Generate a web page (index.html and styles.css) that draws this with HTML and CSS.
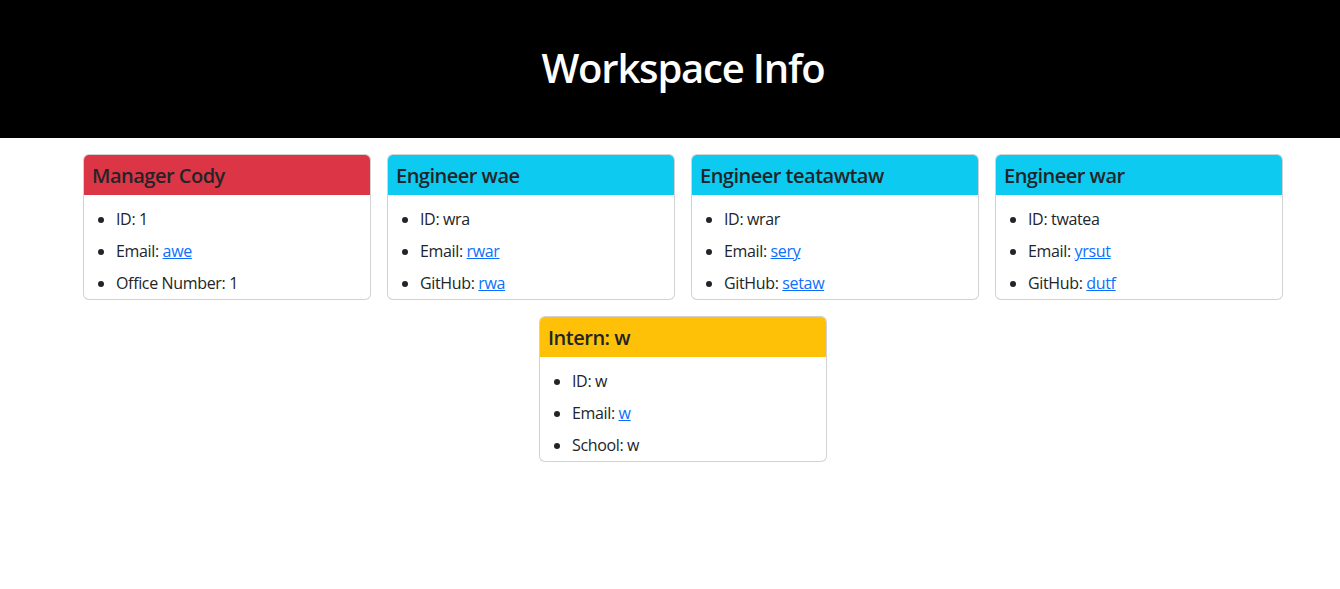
FILE: index.html
```html
<!DOCTYPE html>
<html lang="en">
<head>
<meta charset="utf-8">
<title>Workspace Info</title>
<link rel="stylesheet" href="styles.css">
</head>
<body>
<div class="page">
  <header class="banner">
    <h1 class="banner-title">Workspace Info</h1>
  </header>
  <main class="cards">
    <section class="card">
      <h2 class="card-header header-manager">Manager Cody</h2>
      <ul class="card-list">
        <li>ID: 1</li>
        <li>Email: <a href="#">awe</a></li>
        <li>Office Number: 1</li>
      </ul>
    </section>
    <section class="card">
      <h2 class="card-header header-engineer">Engineer wae</h2>
      <ul class="card-list">
        <li>ID: wra</li>
        <li>Email: <a href="#">rwar</a></li>
        <li>GitHub: <a href="#">rwa</a></li>
      </ul>
    </section>
    <section class="card">
      <h2 class="card-header header-engineer">Engineer teatawtaw</h2>
      <ul class="card-list">
        <li>ID: wrar</li>
        <li>Email: <a href="#">sery</a></li>
        <li>GitHub: <a href="#">setaw</a></li>
      </ul>
    </section>
    <section class="card">
      <h2 class="card-header header-engineer">Engineer war</h2>
      <ul class="card-list">
        <li>ID: twatea</li>
        <li>Email: <a href="#">yrsut</a></li>
        <li>GitHub: <a href="#">dutf</a></li>
      </ul>
    </section>
    <section class="card">
      <h2 class="card-header header-intern">Intern: w</h2>
      <ul class="card-list">
        <li>ID: w</li>
        <li>Email: <a href="#">w</a></li>
        <li>School: w</li>
      </ul>
    </section>
  </main>
</div>
</body>
</html>
```

FILE: styles.css
```css
html, body {
  margin: 0;
  padding: 0;
  overflow-x: hidden;
  background: #fff;
}

body {
  font-family: "Open Sans", "Noto Sans", sans-serif;
  font-size: 16px;
  line-height: 1.5;
  color: #212529;
  letter-spacing: -0.35px;
}

.page {
  width: 1366px;
}

.banner {
  background: #000;
  height: 138px;
  display: flex;
  align-items: center;
  justify-content: center;
}

.banner-title {
  margin: 0 0 2px;
  color: #fff;
  font-size: 40px;
  font-weight: 600;
  line-height: 48px;
  letter-spacing: -1.2px;
}

.cards {
  margin-top: 8px;
  display: flex;
  flex-wrap: wrap;
  justify-content: center;
}

.card {
  box-sizing: border-box;
  width: 288px;
  margin: 8px;
  border: 1px solid rgba(0, 0, 0, 0.175);
  border-radius: 6px;
  overflow: hidden;
  background: #fff;
}

.card-header {
  margin: 0;
  padding: 9px 8px 7px;
  font-size: 20px;
  font-weight: 600;
  line-height: 24px;
  color: #212529;
  letter-spacing: -0.5px;
}

.header-manager { background: #dc3545; }
.header-engineer { background: #0dcaf0; }
.header-intern { background: #ffc107; }

.card-list {
  margin: 0;
  padding: 8px 0 0 32px;
}

.card-list li {
  padding: 4px 0;
  line-height: 24px;
}

.card-list a {
  color: #0d6efd;
  text-decoration: underline;
}
```
